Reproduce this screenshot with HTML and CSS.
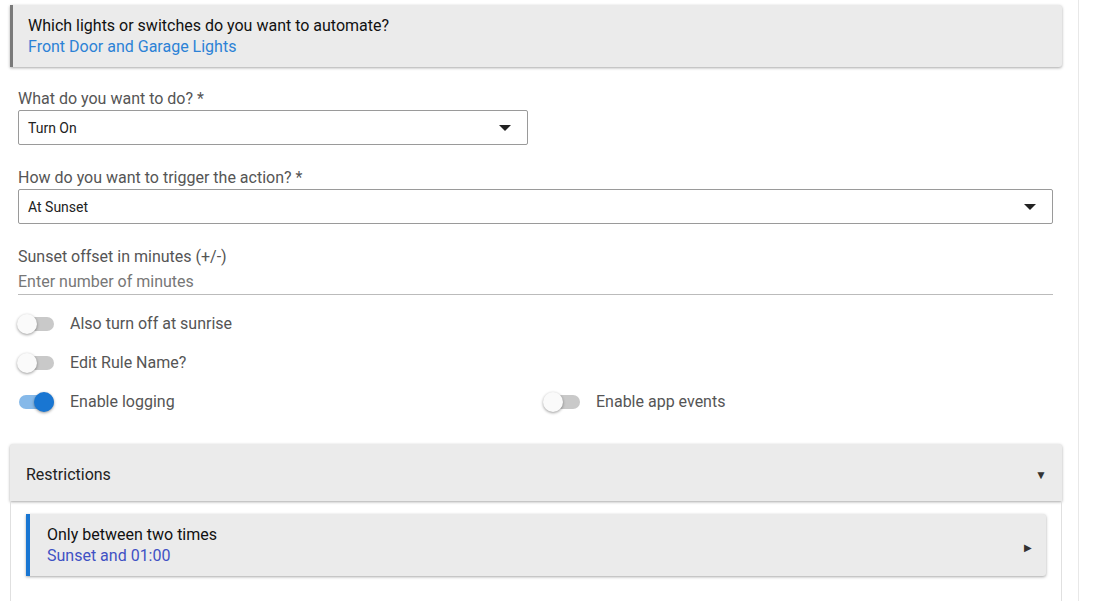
FILE: index.html
```html
<!DOCTYPE html>
<html lang="en">
<head>
    <meta charset="UTF-8">
    <meta name="viewport" content="width=device-width, initial-scale=1.0">
    <title>Rule</title>
    <link rel="stylesheet" href="styles.css">
</head>
<body>
    <div class="page">
        <div class="main">
            <div class="card">
                <div class="card-title">Which lights or switches do you want to automate?</div>
                <div class="card-value">Front Door and Garage Lights</div>
            </div>

            <div class="form">
                <label class="field-label">What do you want to do? *</label>
                <div class="select short">
                    <span>Turn On</span>
                    <span class="caret"></span>
                </div>

                <label class="field-label">How do you want to trigger the action? *</label>
                <div class="select">
                    <span>At Sunset</span>
                    <span class="caret"></span>
                </div>

                <label class="field-label">Sunset offset in minutes (+/-)</label>
                <input class="text-input" type="text" placeholder="Enter number of minutes">

                <div class="switch-row">
                    <div class="switch"><span class="track"></span><span class="knob"></span></div>
                    <span class="switch-label">Also turn off at sunrise</span>
                </div>
                <div class="switch-row">
                    <div class="switch"><span class="track"></span><span class="knob"></span></div>
                    <span class="switch-label">Edit Rule Name?</span>
                </div>
                <div class="switch-grid">
                    <div class="switch-row">
                        <div class="switch on"><span class="track"></span><span class="knob"></span></div>
                        <span class="switch-label">Enable logging</span>
                    </div>
                    <div class="switch-row">
                        <div class="switch"><span class="track"></span><span class="knob"></span></div>
                        <span class="switch-label">Enable app events</span>
                    </div>
                </div>
            </div>

            <div class="section">
                <div class="section-head">
                    <span>Restrictions</span>
                    <span class="arrow-down">&#9660;</span>
                </div>
                <div class="section-body">
                    <div class="card blue">
                        <div class="card-text">
                            <div class="card-title">Only between two times</div>
                            <div class="card-value indigo">Sunset and 01:00</div>
                        </div>
                        <span class="arrow-right">&#9654;</span>
                    </div>
                </div>
            </div>
        </div>
    </div>
</body>
</html>
```

FILE: styles.css
```css
*{
    margin: 0;
    padding: 0;
    box-sizing: border-box;
}
body{
    font-family: Roboto, "Liberation Sans", Arial, sans-serif;
    background: #fff;
    overflow: hidden;
}
.page{
    width: 1079px;
    height: 100vh;
    border-right: 1px solid #e8e8e8;
    padding: 5px 16px 0 10px;
}
.main{
    width: 1052px;
}
.card{
    background: #ebebeb;
    border-left: 3px solid #7a7a7a;
    border-radius: 0 3px 3px 0;
    box-shadow: 0 1px 3px rgba(0,0,0,0.35);
    height: 62px;
    padding: 10px 15px 0;
}
.card-title{
    font-size: 16px;
    line-height: 21px;
    color: #111;
}
.card-value{
    font-size: 16px;
    line-height: 21px;
    color: #2c82d6;
}
.form{
    padding: 0 9px 0 8px;
}
.field-label{
    display: block;
    font-size: 16px;
    line-height: 20px;
    color: #555;
    margin-top: 22px;
    margin-bottom: 1px;
}
.form .field-label ~ .field-label{
    margin-top: 23px;
}
.select{
    height: 35px;
    border: 1px solid #9a9a9a;
    border-radius: 2px;
    display: flex;
    align-items: center;
    justify-content: space-between;
    padding: 0 16px 0 9px;
    font-size: 14px;
    color: #222;
}
.select.short{
    width: 510px;
}
.caret{
    width: 0;
    height: 0;
    border-left: 6px solid transparent;
    border-right: 6px solid transparent;
    border-top: 6px solid #222;
}
.text-input{
    display: block;
    width: 100%;
    height: 27px;
    border: none;
    border-bottom: 1px solid #bbb;
    font-family: inherit;
    font-size: 16px;
    color: #333;
    outline: none;
    background: transparent;
    margin-bottom: 9px;
}
.text-input::placeholder{
    color: #777;
}
.switch-row{
    height: 39px;
    display: flex;
    align-items: center;
}
.switch-grid{
    display: grid;
    grid-template-columns: 526px 1fr;
}
.switch{
    position: relative;
    width: 36px;
    height: 20px;
    margin-right: 16px;
}
.track{
    position: absolute;
    left: 1px;
    top: 3px;
    width: 35px;
    height: 14px;
    border-radius: 7px;
    background: #c9c9c9;
}
.knob{
    position: absolute;
    left: -1px;
    top: 0;
    width: 20px;
    height: 20px;
    border-radius: 50%;
    background: #fafafa;
    box-shadow: 0 1px 3px rgba(0,0,0,0.4);
}
.switch.on .track{
    background: #86b9e9;
}
.switch.on .knob{
    left: 16px;
    background: #1976d2;
}
.switch-label{
    font-size: 16px;
    color: #555;
}
.section{
    margin-top: 23px;
}
.section-head{
    height: 57px;
    background: #ebebeb;
    border-radius: 3px 3px 0 0;
    box-shadow: 0 1px 3px rgba(0,0,0,0.35);
    display: flex;
    align-items: center;
    justify-content: space-between;
    padding: 4px 15px 0 16px;
    font-size: 16px;
    color: #222;
}
.arrow-down{
    font-size: 12px;
    color: #333;
}
.section-body{
    border-left: 1px solid #e0e0e0;
    border-right: 1px solid #e0e0e0;
    height: 120px;
    padding: 13px 15px 0;
}
.card.blue{
    border-left: 4px solid #1976d2;
    display: flex;
    align-items: center;
    justify-content: space-between;
    padding: 0 14px 0 17px;
}
.indigo{
    color: #3f51c4;
}
.arrow-right{
    font-size: 10px;
    color: #333;
    padding-top: 4px;
}
```
